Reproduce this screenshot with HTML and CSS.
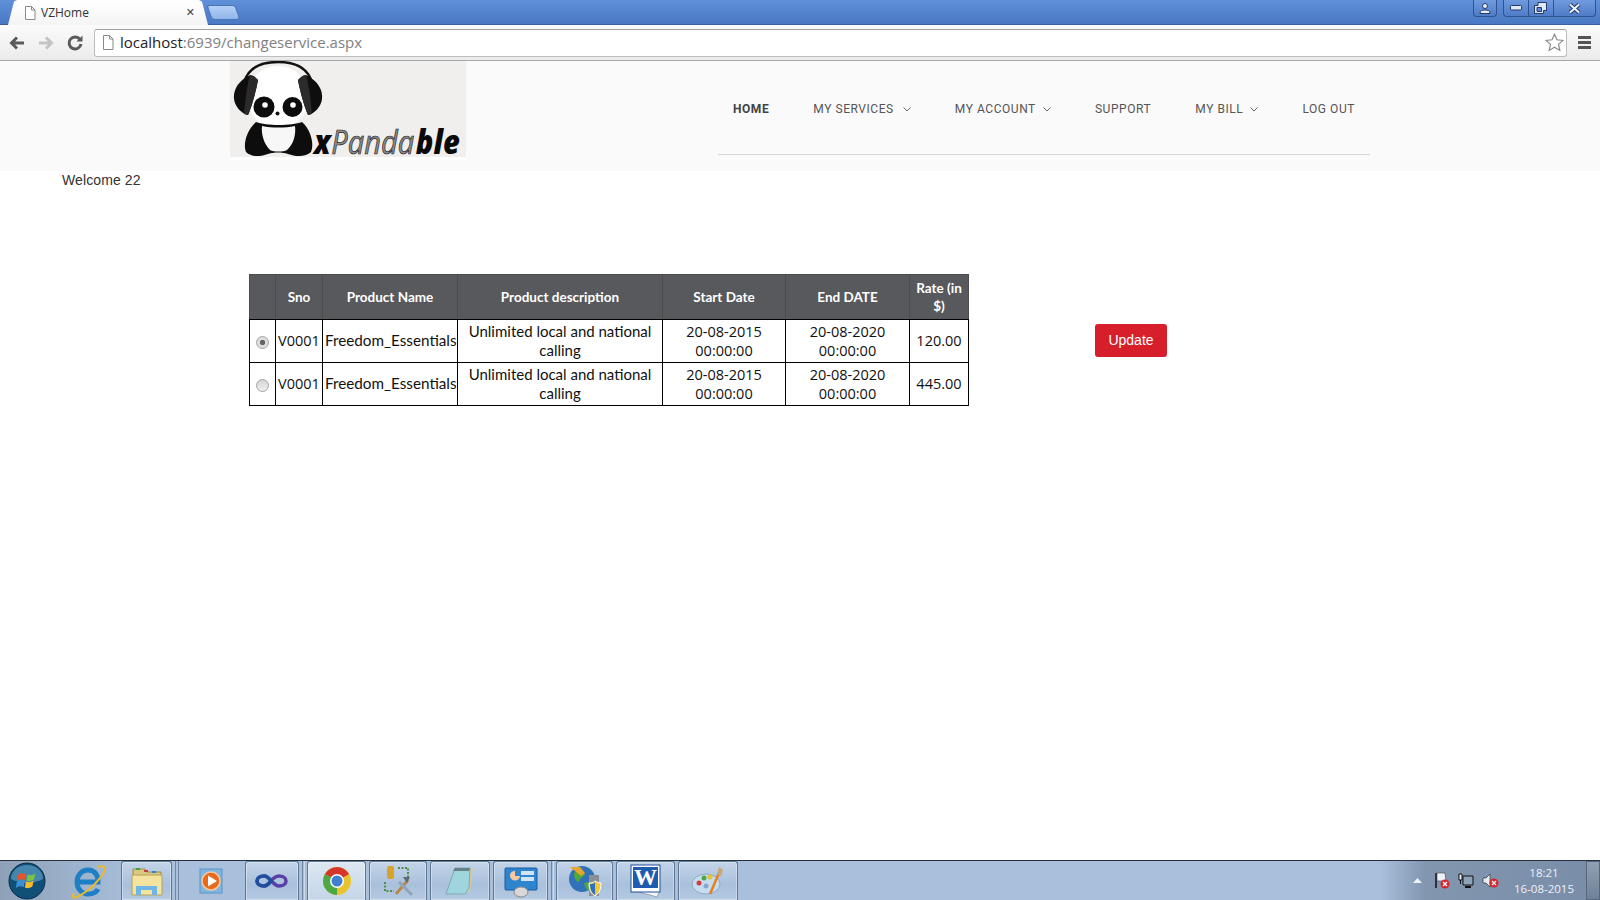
FILE: index.html
```html
<!DOCTYPE html>
<html lang="en">
<head>
<meta charset="utf-8">
<title>VZHome</title>
<link rel="stylesheet" href="styles.css">
</head>
<body>
<div class="screen">
  <div class="tabstrip">
    <div class="tab">
      <svg class="tab-doc" width="12" height="14" viewBox="0 0 12 14"><path d="M1.5.5h6l3.500 3.500v9.500h-9.500z M7.500.5v3.500h3.500" fill="#fff" stroke="#8a8a8a"/></svg>
      <span class="tab-title">VZHome</span>
      <span class="tab-close">✕</span>
    </div>
    <div class="newtab"></div>
    <div class="winctrls">
      <div class="winbtn user"><svg width="12" height="11" viewBox="0 0 12 11"><circle cx="6" cy="3" r="2.500" fill="#e8eef8" stroke="#23396a"/><path d="M1 10.500c0-3 2-3.500 5-3.500s5 .5 5 3.500z" fill="#e8eef8" stroke="#23396a"/></svg></div>
      <div class="wingroup">
        <div class="winbtn min"><svg width="12" height="6" viewBox="0 0 12 6"><rect x=".5" y=".5" width="11" height="4.500" rx="1" fill="#dfe8f6" stroke="#23396a"/></svg></div>
        <div class="winbtn max"><svg width="13" height="12" viewBox="0 0 13 12"><path d="M4 .5h8.500v8h-3v3h-9v-8h3.500z" fill="#dfe8f6" stroke="#23396a"/><path d="M3 5.500h4.500v4h-4.500z" fill="#5b88d2" stroke="#23396a"/></svg></div>
        <div class="winbtn close"><svg width="13" height="11" viewBox="0 0 13 11"><path d="M2 1.500l9 8M11 1.500l-9 8" stroke="#23396a" stroke-width="4"/><path d="M2 1.500l9 8M11 1.500l-9 8" stroke="#eef3fb" stroke-width="2"/></svg></div>
      </div>
    </div>
  </div>
  <div class="toolbar">
    <svg class="tool-ico" width="18" height="16" viewBox="0 0 18 16"><path d="M16 8H4M9 2.500L3.500 8 9 13.500" fill="none" stroke="#5a5a5a" stroke-width="3"/></svg>
    <svg class="tool-ico fwd" width="18" height="16" viewBox="0 0 18 16"><path d="M2 8h12M9 2.500L14.500 8 9 13.500" fill="none" stroke="#c4c4c4" stroke-width="3"/></svg>
    <svg class="tool-ico rel" width="18" height="18" viewBox="0 0 18 18"><path d="M14 5.500A6 6 0 1 0 15 10" fill="none" stroke="#5a5a5a" stroke-width="3"/><path d="M10.500 7.500H16.500V1.500z" fill="#5a5a5a"/></svg>
    <div class="omnibox">
      <svg class="omni-doc" width="12" height="15" viewBox="0 0 12 15"><path d="M1.500.5h6l3.500 3.500v10.500h-9.500z M7.500.5v3.500h3.500" fill="#fff" stroke="#8a8a8a"/></svg>
      <span class="url-host">localhost</span><span class="url-rest">:6939/changeservice.aspx</span>
      <svg class="star" width="19" height="19" viewBox="0 0 19 19"><path d="M9.500 1.200l2.500 5.600 6 .6-4.500 4 1.300 6-5.300-3.100-5.300 3.100 1.300-6-4.500-4 6-.6z" fill="#fff" stroke="#8a8a8a" stroke-width="1.200"/></svg>
    </div>
    <div class="hamburger"><i></i><i></i><i></i></div>
  </div>

  <header class="site-header">
    <svg class="logo" width="236" height="108" viewBox="0 0 236 108">
      <rect width="236" height="96" fill="#f0efed"/>
      <rect y="96" width="236" height="3" fill="#fff"/>
      <circle cx="48" cy="36" r="31" fill="#fff"/>
      <path d="M14 22C18 6 32 1 48 1s30 5 34 21" fill="none" stroke="#111" stroke-width="2.500"/>
      <path d="M20 14C8 20 3 29 4 38c1 8 8 15 14 16 4-9 8-24 10-35z" fill="#0e0e0e"/>
      <path d="M20 14c3 0 6 2 8 5-2 11-6 26-10 35-2 0-3-1-4-1 1-12 3-29 6-39z" fill="#2d2a2b"/>
      <g transform="matrix(-1 0 0 1 96 0)">
        <path d="M20 14C8 20 3 29 4 38c1 8 8 15 14 16 4-9 8-24 10-35z" fill="#0e0e0e"/>
        <path d="M20 14c3 0 6 2 8 5-2 11-6 26-10 35-2 0-3-1-4-1 1-12 3-29 6-39z" fill="#2d2a2b"/>
      </g>
      <circle cx="34" cy="46" r="10.500" fill="#0c0c0c"/>
      <circle cx="62.500" cy="46" r="10" fill="#0c0c0c"/>
      <circle cx="35" cy="44" r="2.800" fill="#fff"/>
      <circle cx="63" cy="44" r="2.800" fill="#fff"/>
      <circle cx="47.500" cy="52.500" r="2" fill="#111"/>
      <path d="M26 61C16 70 13 84 16 91c5 5 14 5 22 2 6-2 14-2 20 0 8 3 18 3 23-2 3-7 1-21-9-30-10 4-36 4-46 0z" fill="#0d0d0d"/>
      <path d="M32 65c10 2 23 2 33 0 1 8-1 18-8 24-4 2-13 2-17 0-6-6-9-16-8-24z" fill="#f7f7f7"/>
      <text class="logo-text" transform="translate(84 93) scale(.88 1)"><tspan class="logo-bold">x</tspan><tspan class="logo-thin" dx="1">Panda</tspan><tspan class="logo-bold" dx="2">ble</tspan></text>
    </svg>
    <nav class="nav">
      <a class="nav-item active">HOME</a>
      <a class="nav-item">MY SERVICES<svg class="chev wide" width="8" height="5" viewBox="0 0 8 5"><path d="M.5.5L4 4 7.500.5" fill="none" stroke="#666"/></svg></a>
      <a class="nav-item">MY ACCOUNT<svg class="chev" width="8" height="5" viewBox="0 0 8 5"><path d="M.5.5L4 4 7.500.5" fill="none" stroke="#666"/></svg></a>
      <a class="nav-item">SUPPORT</a>
      <a class="nav-item">MY BILL<svg class="chev" width="8" height="5" viewBox="0 0 8 5"><path d="M.5.5L4 4 7.500.5" fill="none" stroke="#666"/></svg></a>
      <a class="nav-item">LOG OUT</a>
    </nav>
  </header>

  <main class="content">
    <p class="welcome">Welcome 22</p>
    <div class="service-row">
      <table class="grid">
        <thead>
          <tr>
            <th class="c-sel"></th>
            <th class="c-sno">Sno</th>
            <th class="c-name">Product Name</th>
            <th class="c-desc">Product description</th>
            <th class="c-start">Start Date</th>
            <th class="c-end">End DATE</th>
            <th class="c-rate">Rate (in $)</th>
          </tr>
        </thead>
        <tbody>
          <tr>
            <td class="center"><input class="radio" type="radio" name="svc" checked></td>
            <td class="num solo">V0001</td>
            <td class="name solo">Freedom_Essentials</td>
            <td class="center">Unlimited local and national calling</td>
            <td class="center num">20-08-2015 00:00:00</td>
            <td class="center num">20-08-2020 00:00:00</td>
            <td class="center num solo">120.00</td>
          </tr>
          <tr>
            <td class="center"><input class="radio" type="radio" name="svc"></td>
            <td class="num solo">V0001</td>
            <td class="name solo">Freedom_Essentials</td>
            <td class="center">Unlimited local and national calling</td>
            <td class="center num">20-08-2015 00:00:00</td>
            <td class="center num">20-08-2020 00:00:00</td>
            <td class="center num solo">445.00</td>
          </tr>
        </tbody>
      </table>
      <button class="update" type="button">Update</button>
    </div>
  </main>

  <footer class="taskbar">
    <div class="tb-item">
      <svg width="38" height="38" viewBox="0 0 38 38">
        <circle cx="19" cy="19" r="18" fill="#0f4f78" stroke="#0b2c44"/>
        <path d="M3 17a16 14 0 0 1 32 0c-10 5-22 5-32 0z" fill="#5d9ec4" opacity=".7"/>
        <path d="M10 13c3-2 5-2 8-1l-1 6c-3-1-5-1-8 1z" fill="#e8532a"/>
        <path d="M19.500 12.500c3 1 5 1 8-1l-1.500 6c-3 2-5 2-7.500 1z" fill="#7cc142"/>
        <path d="M8.800 20c3-2 5-2 8-1l-1 6c-3-1-5-1-8 1z" fill="#3c8fd8"/>
        <path d="M18 19.500c3 1 5 1 7.800-1l-1.500 6c-3 2-5 2-7.500 1z" fill="#f6bb2d"/>
      </svg>
    </div>
    <div class="tb-item">
      <svg width="36" height="36" viewBox="0 0 36 36">
        <path d="M7 19h21c0-8-4-12-10-12S7 12 7 19s5 12 11 12c4 0 8-1 10-5" fill="none" stroke="#1f7fc4" stroke-width="5"/>
        <path d="M4 30C1 35 3 36 9 33c10-5 20-15 25-24 2-5 0-7-7-5" fill="none" stroke="#e8b830" stroke-width="2"/>
      </svg>
    </div>
    <div class="tb-item btn">
      <svg width="32" height="30" viewBox="0 0 32 30">
        <path d="M2 3h12l2 3h14v8H2z" fill="#d9c880" stroke="#a08a44"/>
        <rect x="5" y="2" width="4" height="2" fill="#3ca83c"/><rect x="13" y="4" width="4" height="2" fill="#c84040"/><rect x="21" y="5" width="4" height="2" fill="#3a80d0"/>
        <path d="M1 9h30v20H1z" fill="#f3e39f" stroke="#b8a156"/>
        <path d="M5 29v-9h21v9h-5v-5h-11v5z" fill="#6fb6e8"/>
      </svg>
    </div>
    <div class="tb-sep"></div>
    <div class="tb-item">
      <svg width="28" height="28" viewBox="0 0 28 28">
        <rect x="2" y="2" width="22" height="24" fill="#7fb6e0" stroke="#5d94c6"/>
        <circle cx="13" cy="14" r="9" fill="#e86a1c" stroke="#f9c9a0" stroke-width="1.500"/>
        <path d="M10 8.500l9 5.500-9 5.500z" fill="#fff"/>
      </svg>
    </div>
    <div class="tb-item btn">
      <svg width="34" height="18" viewBox="0 0 34 18">
        <path d="M9 4c-4 0-7 2-7 5s3 5 7 5c5 0 8-10 15-10 4 0 7 2 7 5s-3 5-7 5c-6 0-9-10-15-10z" fill="none" stroke="#5b3fa8" stroke-width="3.500"/>
        <path d="M2 9c0 3 3 5 7 5 3 0 5-2 7-5-2-3-4-5-7-5-4 0-7 2-7 5z" fill="none" stroke="#1d4f9c" stroke-width="3.500"/>
      </svg>
    </div>
    <div class="tb-sep thin"></div>
    <div class="tb-item btn light">
      <svg width="30" height="30" viewBox="0 0 30 30">
        <circle cx="15" cy="15" r="14" fill="#e8c32e"/>
        <path d="M15 15L2.900 8A14 14 0 0 1 27.100 8z" fill="#d6352c"/>
        <path d="M15 15L2.900 8A14 14 0 0 0 15 29z" fill="#4da742"/>
        <circle cx="15" cy="15" r="7" fill="#fff"/>
        <circle cx="15" cy="15" r="5.500" fill="#3f7fd0"/>
      </svg>
    </div>
    <div class="tb-item btn">
      <svg width="32" height="34" viewBox="0 0 32 34">
        <rect x="5" y="2" width="7" height="13" rx="2" fill="#d9a228"/>
        <path d="M16 4h10v10M3 18v9h9" fill="none" stroke="#4f8f3f" stroke-width="2" stroke-dasharray="2 1.500"/>
        <path d="M14 30L26 16" stroke="#b8884a" stroke-width="3"/>
        <path d="M30 31L17 18" stroke="#8fa6b8" stroke-width="3"/>
        <path d="M21 13h7l-3 6z" fill="#5d6b78"/>
      </svg>
    </div>
    <div class="tb-item btn">
      <svg width="32" height="32" viewBox="0 0 32 32">
        <path d="M13 3h16l-3 24H6z" fill="#d9c9a0"/>
        <path d="M11 3h15L25 23l-4 6H2z" fill="#9fd6de" stroke="#7fa8b0"/>
        <path d="M11 3h15l-1 3H9z" fill="#66808a"/>
      </svg>
    </div>
    <div class="tb-item btn">
      <svg width="34" height="34" viewBox="0 0 34 34">
        <rect x="1" y="4" width="32" height="22" rx="1" fill="#2f84d0" stroke="#1c5a9c"/>
        <path d="M6 11a5 5 0 0 1 5-4v5h5a5 5 0 0 1-10-1z" fill="#f6c9a0"/>
        <rect x="17" y="7" width="13" height="4" fill="#cfe4f6"/><rect x="17" y="13" width="13" height="4" fill="#cfe4f6"/>
        <ellipse cx="17" cy="28" rx="7" ry="5" fill="#d8d8d8" stroke="#888"/>
      </svg>
    </div>
    <div class="tb-sep thin"></div>
    <div class="tb-item btn">
      <svg width="34" height="34" viewBox="0 0 34 34">
        <circle cx="14" cy="15" r="13" fill="#2f72b8"/>
        <path d="M6 9c4-3 8-2 11 1-1 4-6 3-6 8-3 0-5-4-5-9zM16 19c4-2 8 0 8 3-1 3-4 5-6 3z" fill="#4fa83c"/>
        <path d="M2 3h10l5 6-4 3z" fill="#e8a52c"/>
        <rect x="21" y="11" width="10" height="21" fill="#8a8f96"/>
        <path d="M21 19c4 0 5-1 6-2 2 1 3 2 6 2 0 8-3 11-6 13-3-2-6-5-6-13z" fill="#f4c82e" stroke="#fff"/>
        <path d="M27 18v13c-3-2-5-5-5-11 2 0 4 0 5-2z" fill="#2d6fc4"/>
      </svg>
    </div>
    <div class="tb-item btn">
      <svg width="32" height="34" viewBox="0 0 32 34">
        <path d="M8 20l22 6-3 7-22-6z" fill="#f2f4f8" stroke="#9aa6b8"/>
        <rect x="1" y="1" width="29" height="27" fill="#fff" stroke="#1f4f9c"/>
        <rect x="3" y="3" width="25" height="21" fill="#1f5cb0"/>
        <text class="word-w" x="15.500" y="21" text-anchor="middle">W</text>
      </svg>
    </div>
    <div class="tb-item btn">
      <svg width="34" height="32" viewBox="0 0 34 32">
        <ellipse cx="15" cy="19" rx="14" ry="10" fill="#c6dcef" stroke="#8ea9c4"/>
        <circle cx="8" cy="18" r="2.500" fill="#d63c3c"/><circle cx="13" cy="13" r="2.500" fill="#4da742"/><circle cx="19" cy="12" r="2.500" fill="#e8c32e"/><circle cx="15" cy="21" r="2.500" fill="#8aa6c8"/>
        <path d="M19 29L28 8" stroke="#e87f1c" stroke-width="2.500"/>
        <path d="M26 9l2-7 4 3-2 6z" fill="#c8a878"/>
      </svg>
    </div>
    <div class="tray">
      <svg class="tray-up" width="9" height="5" viewBox="0 0 9 5"><path d="M0 5l4.500-5L9 5z" fill="#eef3f8"/></svg>
      <svg width="16" height="17" viewBox="0 0 16 17"><path d="M2 1v15" stroke="#111" stroke-width="1.500"/><path d="M3 1h8l1 8H3z" fill="#eef1f5" stroke="#444" stroke-width=".6"/><circle cx="11" cy="12" r="4.500" fill="#d6232c"/><path d="M9 10l4 4M13 10l-4 4" stroke="#fff" stroke-width="1.300"/></svg>
      <svg width="16" height="16" viewBox="0 0 16 16"><path d="M5 3h10v9H5z" fill="#8ea2ba" stroke="#111"/><path d="M7 14h6" stroke="#111" stroke-width="2"/><path d="M1 1v6h3V1zM2.500 7v4" fill="#eef1f5" stroke="#111"/></svg>
      <svg width="17" height="16" viewBox="0 0 17 16"><path d="M1 5h3l4-4v13l-4-4H1z" fill="#e6ebf2" stroke="#333" stroke-width=".7"/><circle cx="12" cy="10" r="4.500" fill="#d6232c"/><path d="M10 8l4 4M14 8l-4 4" stroke="#fff" stroke-width="1.300"/></svg>
      <div class="clock"><span>18:21</span><span>16-08-2015</span></div>
      <div class="show-desktop"></div>
    </div>
  </footer>
</div>
</body>
</html>
```

FILE: styles.css
```css
* { box-sizing: border-box; }
html, body { margin: 0; padding: 0; }
body { font-family: "Liberation Sans", Arial, sans-serif; background: #fff; }
.screen { width: 1600px; height: 900px; display: flex; flex-direction: column; overflow: hidden; }

/* browser tab strip */
.tabstrip { height: 25px; flex: none; display: flex; align-items: flex-start; padding-left: 8px; background: linear-gradient(#5f90d8, #4a78c4); border-bottom: 1px solid #37609f; }
.tab { width: 200px; height: 25px; padding: 0 13px 0 16px; display: flex; align-items: center; background: linear-gradient(#fff, #f4f4f4); clip-path: polygon(0 100%, 3% 6%, 4.500% 0, 95.500% 0, 97% 6%, 100% 100%); }
.tab-doc { margin-right: 5px; }
.tab-title { flex: 1; font: 12px "Open Sans", sans-serif; color: #333; }
.tab-close { font: bold 11px "DejaVu Sans", sans-serif; color: #444; }
.newtab { width: 29px; height: 15px; margin: 5px 0 0 1px; background: linear-gradient(#b4d0f6, #90b6ea); border: 1px solid #4a74b8; border-radius: 3px 3px 4px 4px; transform: skewX(20deg); }
.winctrls { margin-left: auto; margin-right: 4px; display: flex; gap: 6px; }
.wingroup { display: flex; }
.winbtn { height: 17px; display: flex; align-items: center; justify-content: center; border: 1px solid #2f5290; border-top: 0; background: linear-gradient(#6f9ade, #4f7cc6); }
.user { width: 24px; border-radius: 0 0 4px 4px; }
.min { width: 26px; border-radius: 0 0 0 4px; }
.max { width: 25px; border-left: 0; padding-right: 2px; }
.close { width: 42px; border-left: 0; border-radius: 0 0 4px 0; }

/* toolbar */
.toolbar { height: 36px; flex: none; display: flex; align-items: center; padding: 0 8px; background: linear-gradient(#fbfbfb, #ebebeb); border-bottom: 1px solid #a8a8a8; }
.tool-ico { flex: none; margin-right: 11px; }
.tool-ico.rel { margin-right: 10px; }
.omnibox { width: 1473px; height: 28px; display: flex; align-items: center; padding: 0 2px 1px 7px; background: #fff; border: 1px solid #bdbdbd; border-top-color: #a0a0a0; border-radius: 3px; font: 15px "Open Sans", sans-serif; }
.omni-doc { margin-right: 6px; }
.url-host { color: #222; }
.url-rest { color: #808080; }
.star { margin-left: auto; }
.hamburger { margin-left: 11px; width: 13px; display: flex; flex-direction: column; gap: 2px; }
.hamburger i { display: block; height: 3px; background: #555; }

/* site header */
.site-header { height: 110px; flex: none; display: flex; align-items: flex-start; padding-left: 230px; background: #fafafa; }
.logo { flex: none; display: block; }
.logo-text { font: italic 33px "Open Sans", sans-serif; }
.logo-bold { font-weight: 800; fill: #0a0a0a; }
.logo-thin { font-weight: 400; fill: #8a8a8a; stroke: #222; stroke-width: .7px; }
.nav { width: 652px; height: 94px; margin-left: 252px; padding: 0 15px 0 15px; display: flex; align-items: flex-start; justify-content: space-between; border-bottom: 1px solid #d6d6d6; }
.nav-item { margin-top: 41px; font: 12px/14px Roboto, sans-serif; letter-spacing: .55px; color: #555; white-space: nowrap; }
.nav-item.active { font-weight: 700; color: #444; }
.chev { margin-left: 7px; vertical-align: 1px; }
.chev.wide { margin-left: 9px; }

/* main */
.content { flex: 1; background: #fff; }
.welcome { margin: 0; padding: 1px 0 0 62px; font-size: 14px; line-height: 16px; letter-spacing: .1px; color: #333; }
.service-row { display: flex; align-items: flex-start; padding: 86px 0 0 249px; }
.grid { width: 719px; table-layout: fixed; border-collapse: collapse; border: 1px solid #000; }
.grid th { height: 45px; padding: 0 2px; background: #58595d; color: #fff; border: 1px solid #4c4c4c; border-bottom-color: #000; font: 700 13.500px/18px Lato, sans-serif; text-align: center; }
.grid td { height: 43px; padding: 0 2px; border: 1px solid #000; font: 15px/19px Lato, sans-serif; color: #111; }
.grid td.num { font: 14.500px/19px "Open Sans", sans-serif; }
.grid td.name { font-size: 15.250px; }
.grid td.solo { padding-bottom: 2px; }
.center { text-align: center; }
.c-sel { width: 26px; }
.c-sno { width: 47px; }
.c-name { width: 135px; }
.c-desc { width: 205px; }
.c-start { width: 123px; }
.c-end { width: 124px; }
.c-rate { width: 59px; }
.radio { appearance: none; display: block; width: 13px; height: 13px; margin: 2px auto 0; border-radius: 50%; border: 1px solid #a4a4a4; background: linear-gradient(#d4d4d4, #f0f0f0); }
.radio:checked { background: radial-gradient(circle, #666 0 2.500px, #dedede 3px); }
.update { width: 72px; height: 33px; margin: 50px 0 0 126px; padding: 0 0 2px; background: #d71f2b; color: #fff; border: 0; border-radius: 3px; font: 14px "Liberation Sans", sans-serif; }

/* taskbar */
.taskbar { height: 40px; flex: none; display: grid; grid-template-columns: 54px 61px 51px 4px 60px 54px 2px 59px 58px 60px 55px 2px 57px 59px 60px 1fr; column-gap: 3px; border-top: 1px solid #26303c; background: linear-gradient(90deg, #8ea1b8 0, #a9c0dc 140px, #a9c0dc 1380px, #8296b0 1425px, #7a8da8 1600px); }
.tb-item { display: flex; align-items: center; justify-content: center; height: 39px; }
.tb-item.btn { border: 1px solid #5e7792; border-bottom: 0; border-radius: 3px 3px 0 0; background: linear-gradient(#c3d4e8, #a9c0dc 60%, #b5cae2); box-shadow: inset 0 0 0 1px rgba(255,255,255,.35); }
.tb-item.btn.light { background: linear-gradient(#dde7f2, #c4d5e8); }
.tb-sep { border-left: 1px solid #7088a4; border-right: 1px solid #7088a4; height: 39px; }
.tb-sep.thin { border-right: 0; box-shadow: 1px 0 0 rgba(255,255,255,.4); }
.word-w { font: 700 23px "Liberation Serif", serif; fill: #fff; }
.tray { display: flex; align-items: center; justify-content: flex-end; gap: 8px; height: 39px; }
.tray-up { margin-right: 4px; }
.clock { width: 68px; margin-left: 3px; display: flex; flex-direction: column; align-items: center; font: 11.500px/16px "Open Sans", sans-serif; color: #eef2f7; }
.show-desktop { width: 14px; height: 39px; border: 1px solid #55677c; background: linear-gradient(#90a0b4, #6f8197); }
```
